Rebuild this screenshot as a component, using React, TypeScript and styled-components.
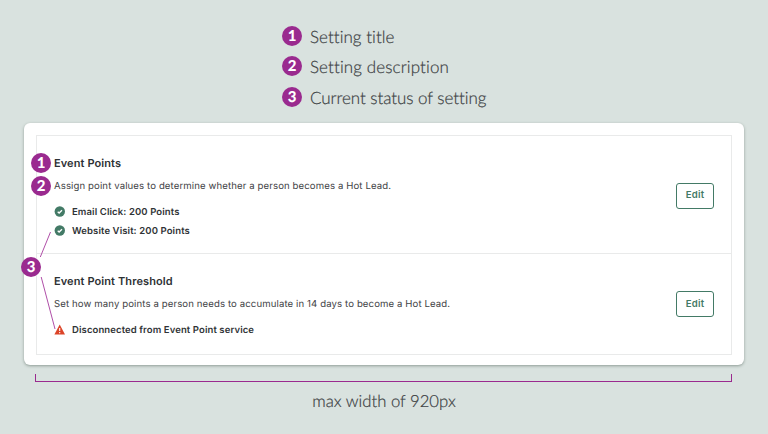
import React from "react";
import styled, { createGlobalStyle } from "styled-components";

const purple = "#9a2a8f";
const green = "#437a66";

const GlobalStyle = createGlobalStyle`
  * { box-sizing: border-box; }
  body { margin: 0; background: #d9e2df; text-rendering: geometricPrecision; }
`;

const Page = styled.main`
  position: relative;
  display: flex;
  flex-direction: column;
  height: 434px;
  width: 768px;
  overflow: hidden;
  background: #d9e2df;
  font-family: Inter, "Liberation Sans", sans-serif;
  white-space: nowrap;
`;

const Legend = styled.ol`
  list-style: none;
  margin: 0;
  padding: 26px 0 0 282px;
  height: 123px;
  display: grid;
  grid-template-rows: 30px 31px 20px;
  align-items: start;
`;

const LegendItem = styled.li`
  display: flex;
  align-items: center;
  gap: 8px;
  height: 20px;
`;

const LegendText = styled.span<{ $spacing: number }>`
  padding-top: 1px;
  font: 300 17px/20px Lato, sans-serif;
  letter-spacing: ${(p) => p.$spacing}px;
  color: #3c4143;
  -webkit-text-stroke: 0.2px #3c4143;
`;

const Badge = styled.span`
  display: flex;
  align-items: center;
  justify-content: center;
  flex: none;
  width: 20px;
  height: 20px;
  border-radius: 50%;
  background: ${purple};
  color: #fff;
  font: 900 15px/20px Lato, sans-serif;
`;

const PinnedBadge = styled(Badge)<{ $x: number; $y: number }>`
  position: absolute;
  left: ${(p) => p.$x}px;
  top: ${(p) => p.$y}px;
`;

const Card = styled.section`
  margin: 0 24px;
  height: 242px;
  padding: 12px 12px 10px 12px;
  border-radius: 6px;
  background: #fff;
  box-shadow: 0 1px 3px rgba(50, 70, 60, 0.45);
`;

const SettingsList = styled.div`
  height: 220px;
  border: 1px solid #e9eaea;
  display: grid;
  grid-template-rows: 118px 100px;
`;

const SettingRow = styled.article<{ $divided?: boolean }>`
  display: flex;
  justify-content: space-between;
  align-items: center;
  padding: 0 17px;
  border-bottom: ${(p) => (p.$divided ? "1px solid #e9eaea" : "0")};
`;

const SettingBody = styled.div`
  align-self: flex-start;
  padding-top: 19px;
`;

const Title = styled.h2`
  margin: 0 0 9px;
  font-size: 11px;
  line-height: 16px;
  font-weight: 600;
  letter-spacing: 0.1px;
  color: #2d3134;
`;

const Description = styled.p`
  margin: 0 0 10px;
  font-size: 9.6px;
  line-height: 14px;
  letter-spacing: 0.11px;
  color: #3f4346;
`;

const Status = styled.div`
  display: flex;
  align-items: center;
  gap: 7px;
  height: 19px;
  margin-top: -2px;
  font-size: 9.5px;
  font-weight: 600;
  letter-spacing: 0.11px;
  color: #2f3336;

  & + & { margin-top: 0; }
`;

const StatusText = styled.span`
  padding-top: 1px;
`;

const StatusIcon = styled.svg`
  width: 11px;
  height: 11px;
  flex: none;
`;

const EditButton = styled.button<{ $offset: number }>`
  width: 38px;
  height: 26px;
  padding: 0 0 1px;
  margin-top: ${(p) => p.$offset}px;
  border: 1px solid ${green};
  border-radius: 3px;
  background: #fff;
  color: ${green};
  font: 600 9.6px/14px Inter, sans-serif;
  letter-spacing: 0.2px;
`;

const Bracket = styled.div`
  margin: 9px 36px 0 35px;
  height: 8px;
  border: 1px solid ${purple};
  border-top: 0;
`;

const Caption = styled.p`
  margin: 9px 0 0;
  font: 300 16.7px/20px Lato, sans-serif;
  color: #3c4143;
  -webkit-text-stroke: 0.2px #3c4143;
  text-align: center;
`;

const Connectors = styled.svg`
  position: absolute;
  left: 30px;
  top: 225px;
  width: 36px;
  height: 110px;
  pointer-events: none;
`;

const CheckIcon = () => (
  <StatusIcon viewBox="0 0 11 11">
    <circle cx="5.8" cy="5.5" r="5.2" fill={green} />
    <path d="M3.7 5.7 5.1 7 8 4.2" fill="none" stroke="#fff" strokeWidth="1.3" />
  </StatusIcon>
);

const WarningIcon = () => (
  <StatusIcon viewBox="0 0 11 11">
    <path d="M5.7.4 11 10.4H.4Z" fill="#dc4428" />
    <path d="M5.7 4v3M5.7 8v1.2" stroke="#fff" strokeWidth="1.1" />
  </StatusIcon>
);

const legend = [
  { text: "Setting title", spacing: 0.04 },
  { text: "Setting description", spacing: 0.11 },
  { text: "Current status of setting", spacing: -0.06 },
];

const settings = [
  {
    title: "Event Points",
    description: "Assign point values to determine whether a person becomes a Hot Lead.",
    statuses: ["Email Click: 200 Points", "Website Visit: 200 Points"],
    ok: true,
    offset: 2,
  },
  {
    title: "Event Point Threshold",
    description: "Set how many points a person needs to accumulate in 14 days to become a Hot Lead.",
    statuses: ["Disconnected from Event Point service"],
    ok: false,
    offset: 0,
  },
];

export default function App() {
  return (
    <Page>
      <GlobalStyle />
      <Legend>
        {legend.map((item, i) => (
          <LegendItem key={item.text}>
            <Badge>{i + 1}</Badge>
            <LegendText $spacing={item.spacing}>{item.text}</LegendText>
          </LegendItem>
        ))}
      </Legend>
      <Card>
        <SettingsList>
          {settings.map((s) => (
            <SettingRow key={s.title} $divided={s.ok}>
              <SettingBody>
                <Title>{s.title}</Title>
                <Description>{s.description}</Description>
                {s.statuses.map((text) => (
                  <Status key={text}>
                    {s.ok ? <CheckIcon /> : <WarningIcon />}
                    <StatusText>{text}</StatusText>
                  </Status>
                ))}
              </SettingBody>
              <EditButton $offset={s.offset}>Edit</EditButton>
            </SettingRow>
          ))}
        </SettingsList>
      </Card>
      <Bracket />
      <Caption>max width of 920px</Caption>
      <Connectors viewBox="30 225 36 110">
        <path d="M50.5 232 40.3 257M41.2 277 55 329" fill="none" stroke="#b04fa8" strokeWidth="1" />
      </Connectors>
      <PinnedBadge $x={31} $y={153}>1</PinnedBadge>
      <PinnedBadge $x={31} $y={176}>2</PinnedBadge>
      <PinnedBadge $x={21} $y={257}>3</PinnedBadge>
    </Page>
  );
}
